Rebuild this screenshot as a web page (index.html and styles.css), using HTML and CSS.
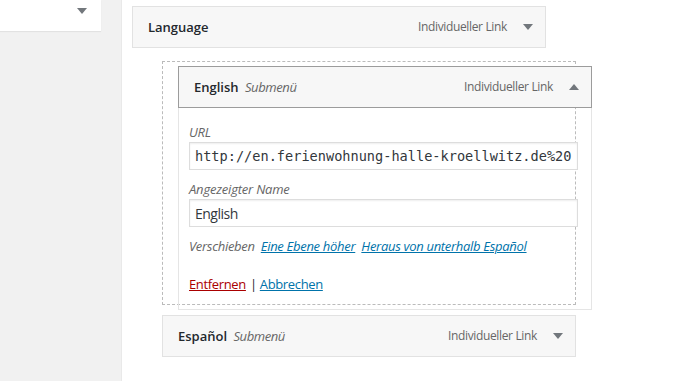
FILE: index.html
```html
<!DOCTYPE html>
<html lang="de">
<head>
  <meta charset="UTF-8" />
  <title>Menüs</title>
  <link rel="stylesheet" href="styles.css">
</head>
<body>
  <div class="sidebar">
    <div class="sidebar-box">
      <span class="arrow down"></span>
    </div>
  </div>

  <div class="main">
    <ul class="menu">
      <li class="menu-item">
        <div class="handle">
          <span class="item-title">Language</span>
          <span class="item-type">Individueller Link</span>
          <span class="arrow down"></span>
        </div>
      </li>

      <li class="placeholder depth-1">
        <!-- item being dragged -->
        <div class="menu-item dragging">
          <div class="handle active">
            <span class="item-title">English <em class="sub">Submenü</em></span>
            <span class="item-type">Individueller Link</span>
            <span class="arrow up"></span>
          </div>
          <div class="settings">
            <label class="field">
              <span class="label">URL</span>
              <input type="text" class="code" value="http://en.ferienwohnung-halle-kroellwitz.de%20" />
            </label>
            <label class="field">
              <span class="label">Angezeigter Name</span>
              <input type="text" value="English" />
            </label>
            <div class="move">
              Verschieben <a href="#">Eine Ebene höher</a> <a href="#">Heraus von unterhalb Español</a>
            </div>
            <div class="actions">
              <a href="#" class="delete">Entfernen</a> | <a href="#">Abbrechen</a>
            </div>
          </div>
        </div>
      </li>

      <li class="menu-item depth-1 last">
        <div class="handle">
          <span class="item-title">Español <em class="sub">Submenü</em></span>
          <span class="item-type">Individueller Link</span>
          <span class="arrow down"></span>
        </div>
      </li>
    </ul>
  </div>
</body>
</html>
```

FILE: styles.css
```css
* { box-sizing: border-box; }
body {
  margin: 0;
  height: 381px;
  overflow: hidden;
  background: #fff;
  font-family: 'Open Sans', 'Noto Sans', sans-serif;
  font-size: 13px;
  color: #23282d;
  display: flex;
}
.sidebar {
  width: 122px;
  flex-shrink: 0;
  background: #f1f1f1;
  border-right: 1px solid #e9e9e9;
}
.sidebar-box {
  width: 101px; height: 31px;
  background: #fff;
  box-shadow: 0 1px 1px rgba(0,0,0,.06);
  display: flex; justify-content: flex-end; align-items: center;
  padding: 0 14px 10px 0;
}
.main { flex: 1; padding: 6px 0 0 10px; }
.menu { list-style: none; margin: 0; padding: 0; }
.menu > li { width: 414px; }
.depth-1 { margin-left: 30px; }

.handle {
  display: flex; align-items: center;
  height: 42px;
  padding: 0 12px 0 15px;
  background: #f7f7f7;
  border: 1px solid #e2e2e2;
  line-height: 20px;
}
.handle.active { border-color: #9c9c9c; }
.item-title { flex: 1; font-weight: 600; }
.sub { font-style: italic; font-weight: 400; color: #666; margin-left: 3px; letter-spacing: -0.4px; }
.item-type { font-size: 12px; color: #666; margin-right: 16px; letter-spacing: -0.35px; }

.arrow { width: 0; height: 0; border-left: 5px solid transparent; border-right: 5px solid transparent; }
.arrow.down { border-top: 6px solid #72777c; }
.arrow.up { border-bottom: 6px solid #72777c; }

.placeholder {
  position: relative;
  margin-top: 13px;
  height: 244px;
  border: 1px dashed #bbb;
}
.dragging {
  position: absolute;
  top: 4px; left: 15px;
  width: 414px;
}
.settings {
  border: 1px solid #e5e5e5;
  border-top: none;
  height: 202px;
  padding: 14px 10px 0 10px;
}
.field { display: block; margin-bottom: 9px; }
.label { display: block; font-style: italic; color: #666; line-height: 20px; height: 20px; letter-spacing: -0.2px; }
.field input {
  width: 389px; height: 28px;
  border: 1px solid #ddd;
  box-shadow: inset 0 1px 2px rgba(0,0,0,.07);
  padding: 0 5px;
  font-family: 'Open Sans', sans-serif; font-size: 14px;
  letter-spacing: -0.5px;
  color: #32373c;
  outline: none;
}
.field input.code { font-family: 'DejaVu Sans Mono', monospace; font-size: 13.6px; letter-spacing: 0; }
.move { font-style: italic; color: #666; line-height: 20px; letter-spacing: -0.3px; }
.move a { margin-left: 3px; }
a { color: #0073aa; }
.actions { margin-top: 18px; line-height: 20px; color: #23282d; letter-spacing: -0.35px; }
.actions .delete { color: #a00; margin-right: 1px; }

.menu > .last { margin-top: 10px; }
```
